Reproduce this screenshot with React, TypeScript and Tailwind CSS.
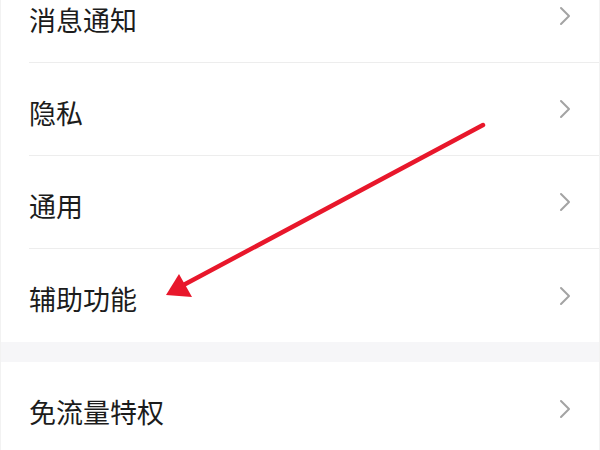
import React from "react";

type Row = { label: string };

const groupA: Row[] = [
  { label: "消息通知" },
  { label: "隐私" },
  { label: "通用" },
  { label: "辅助功能" },
];

const groupB: Row[] = [{ label: "免流量特权" }];

function Chevron() {
  return (
    <svg width="12" height="20" viewBox="0 0 12 20" fill="none" className="shrink-0">
      <path d="M2 2l8 8-8 8" stroke="#a3a3a3" strokeWidth="2" strokeLinecap="round" strokeLinejoin="round" />
    </svg>
  );
}

function SettingsGroup({ rows }: { rows: Row[] }) {
  return (
    <div className="bg-white pl-[28px]">
      {rows.map((row, i) => (
        <div
          key={row.label}
          className={`flex h-[93px] items-center justify-between pr-[28px] ${
            i < rows.length - 1 ? "border-b border-[#ededed]" : ""
          }`}
        >
          <span className="mt-[6px] text-[27px] leading-none text-[#1c1c1c]">{row.label}</span>
          <Chevron />
        </div>
      ))}
    </div>
  );
}

export default function App() {
  return (
    <div
      className="relative h-[450px] w-[600px] overflow-hidden bg-white"
      style={{ fontFamily: '"Noto Sans CJK SC", "Noto Sans", sans-serif' }}
    >
      <div className="-mt-[30px] border-x border-[#f2f2f2]">
        <SettingsGroup rows={groupA} />
        <div className="h-[20px] bg-[#f6f6f8]" />
        <SettingsGroup rows={groupB} />
      </div>

      {/* red annotation arrow */}
      <svg className="pointer-events-none absolute inset-0" width="600" height="450" viewBox="0 0 600 450">
        <line x1="483" y1="125" x2="176" y2="289" stroke="#e8172b" strokeWidth="4.5" strokeLinecap="round" />
        <polygon points="166,295 179,274 192,297" fill="#e8172b" />
      </svg>
    </div>
  );
}
